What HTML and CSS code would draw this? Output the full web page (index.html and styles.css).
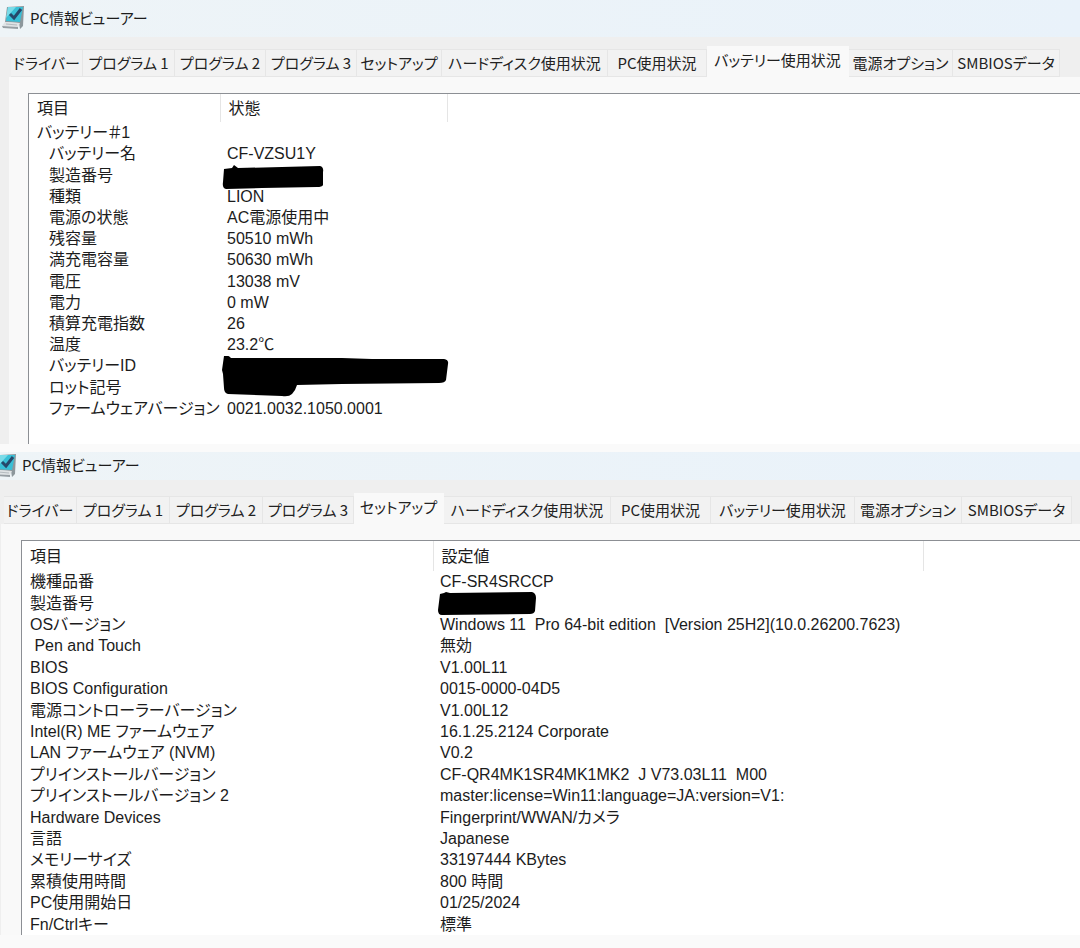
FILE: index.html
```html
<!DOCTYPE html>
<html lang="ja">
<head>
  <meta charset="UTF-8">
  <meta name="viewport" content="width=device-width, initial-scale=1.0">
  <link rel="stylesheet" href="styles.css">
  <title>PC情報ビューアー</title>
</head>
<body>

<section class="window battery">
  <header class="titlebar">
    <svg class="app-icon" viewBox="0 0 22 23" aria-hidden="true">
      <path d="M5 1L22 0L21 20L18 23L17 17L3 16Z" fill="#8d979c"/>
      <path d="M6 1L21 1L18 16L4 15Z" fill="#38bfd6"/>
      <path d="M6 1L14 1L4 12Z" fill="#7adbe8"/>
      <path d="M3 16L18 17L16 21L0 20Z" fill="#dfe3e5"/>
      <path d="M0 20L16 21L16 23L1 22Z" fill="#969ea3"/>
      <path d="M4 18L15 19" stroke="#b4bbbf" fill="none"/>
      <path d="M8 8L12 12L19 3" stroke="#26486a" stroke-width="3" fill="none"/>
    </svg>
    <h1>PC情報ビューアー</h1>
  </header>
  <nav class="tabs">
    <button>ドライバー</button>
    <button>プログラム 1</button>
    <button>プログラム 2</button>
    <button>プログラム 3</button>
    <button>セットアップ</button>
    <button>ハードディスク使用状況</button>
    <button>PC使用状況</button>
    <button class="active">バッテリー使用状況</button>
    <button>電源オプション</button>
    <button>SMBIOSデータ</button>
  </nav>
  <div class="panel">
    <div class="list">
      <table>
        <colgroup><col class="name"><col class="value"><col></colgroup>
        <thead>
          <tr><th>項目</th><th>状態</th><th></th></tr>
        </thead>
        <tbody>
          <tr class="group"><td>バッテリー＃1</td><td colspan="2"></td></tr>
          <tr><td>バッテリー名</td><td colspan="2">CF-VZSU1Y</td></tr>
          <tr><td>製造番号</td><td colspan="2" class="hidden-value">
            <svg class="ink" width="104" height="24" viewBox="0 0 104 24"><path d="M2 4L10 3L12 0L16 3L60 2L98 1Q102 2 101 7L101 20Q100 22 95 22L40 23L4 24Q0 23 1 17Z"/></svg>
          </td></tr>
          <tr><td>種類</td><td colspan="2">LION</td></tr>
          <tr><td>電源の状態</td><td colspan="2">AC電源使用中</td></tr>
          <tr><td>残容量</td><td colspan="2">50510 mWh</td></tr>
          <tr><td>満充電容量</td><td colspan="2">50630 mWh</td></tr>
          <tr><td>電圧</td><td colspan="2">13038 mV</td></tr>
          <tr><td>電力</td><td colspan="2">0 mW</td></tr>
          <tr><td>積算充電指数</td><td colspan="2">26</td></tr>
          <tr><td>温度</td><td colspan="2">23.2℃</td></tr>
          <tr><td>バッテリーID</td><td colspan="2" class="hidden-value">
            <svg class="ink" width="228" height="44" viewBox="0 0 228 44"><path d="M2 0Q5 -2 9 2L120 2L150 3L222 3Q227 4 226 8L224 24Q223 27 217 27L120 28L75 29L73 34L70 38Q67 41 60 40L6 38Q2 37 2 32L1 18L0 14Z"/></svg>
          </td></tr>
          <tr><td>ロット記号</td><td colspan="2"></td></tr>
          <tr><td>ファームウェアバージョン</td><td colspan="2">0021.0032.1050.0001</td></tr>
        </tbody>
      </table>
    </div>
  </div>
</section>

<section class="window setup">
  <header class="titlebar">
    <svg class="app-icon" viewBox="0 0 22 23" aria-hidden="true">
      <path d="M5 1L22 0L21 20L18 23L17 17L3 16Z" fill="#8d979c"/>
      <path d="M6 1L21 1L18 16L4 15Z" fill="#38bfd6"/>
      <path d="M6 1L14 1L4 12Z" fill="#7adbe8"/>
      <path d="M3 16L18 17L16 21L0 20Z" fill="#dfe3e5"/>
      <path d="M0 20L16 21L16 23L1 22Z" fill="#969ea3"/>
      <path d="M4 18L15 19" stroke="#b4bbbf" fill="none"/>
      <path d="M8 8L12 12L19 3" stroke="#26486a" stroke-width="3" fill="none"/>
    </svg>
    <h1>PC情報ビューアー</h1>
  </header>
  <nav class="tabs">
    <button>ドライバー</button>
    <button>プログラム 1</button>
    <button>プログラム 2</button>
    <button>プログラム 3</button>
    <button class="active">セットアップ</button>
    <button>ハードディスク使用状況</button>
    <button>PC使用状況</button>
    <button>バッテリー使用状況</button>
    <button>電源オプション</button>
    <button>SMBIOSデータ</button>
  </nav>
  <div class="panel">
    <div class="list">
      <table>
        <colgroup><col class="name"><col class="value"><col></colgroup>
        <thead>
          <tr><th>項目</th><th>設定値</th><th></th></tr>
        </thead>
        <tbody>
          <tr><td>機種品番</td><td colspan="2">CF-SR4SRCCP</td></tr>
          <tr><td>製造番号</td><td colspan="2" class="hidden-value">
            <svg class="ink" width="98" height="24" viewBox="0 0 98 24"><path d="M2 2L6 1L8 0L12 1L94 0Q98 1 98 6L97 19Q96 22 92 22L4 23Q0 23 0 18Z"/></svg>
          </td></tr>
          <tr><td>OSバージョン</td><td colspan="2">Windows 11  Pro 64-bit edition  [Version 25H2](10.0.26200.7623)</td></tr>
          <tr><td> Pen and Touch</td><td colspan="2">無効</td></tr>
          <tr><td>BIOS</td><td colspan="2">V1.00L11</td></tr>
          <tr><td>BIOS Configuration</td><td colspan="2">0015-0000-04D5</td></tr>
          <tr><td>電源コントローラーバージョン</td><td colspan="2">V1.00L12</td></tr>
          <tr><td>Intel(R) ME ファームウェア</td><td colspan="2">16.1.25.2124 Corporate</td></tr>
          <tr><td>LAN ファームウェア (NVM)</td><td colspan="2">V0.2</td></tr>
          <tr><td>プリインストールバージョン</td><td colspan="2">CF-QR4MK1SR4MK1MK2  J V73.03L11  M00</td></tr>
          <tr><td>プリインストールバージョン 2</td><td colspan="2">master:license=Win11:language=JA:version=V1:</td></tr>
          <tr><td>Hardware Devices</td><td colspan="2">Fingerprint/WWAN/カメラ</td></tr>
          <tr><td>言語</td><td colspan="2">Japanese</td></tr>
          <tr><td>メモリーサイズ</td><td colspan="2">33197444 KBytes</td></tr>
          <tr><td>累積使用時間</td><td colspan="2">800 時間</td></tr>
          <tr><td>PC使用開始日</td><td colspan="2">01/25/2024</td></tr>
          <tr><td>Fn/Ctrlキー</td><td colspan="2">標準</td></tr>
        </tbody>
      </table>
    </div>
  </div>
</section>

</body>
</html>
```
FILE: styles.css
```css
body {
  margin: 0;
  background-color: #fafafa;
  color: #1c1c1c;
  font-family: "Liberation Sans", "Noto Sans CJK JP", sans-serif;
  font-size: 16px;
}

.window {
  background-color: #efefef;
  overflow: hidden;
}

.titlebar {
  display: flex;
  align-items: center;
  gap: 6px;
  box-sizing: border-box;
  height: 37px;
  padding-bottom: 2px;
  background: linear-gradient(to right, #eef4f7, #e9f2fa);
}
.app-icon {
  width: 22px;
  height: 23px;
}
h1 {
  margin: 0;
  font-family: "Noto Sans CJK JP", sans-serif;
  font-feature-settings: "palt";
  font-size: 15px;
  font-weight: normal;
  line-height: 24px;
}

.tabs {
  display: grid;
  align-items: end;
  height: 31px;
}
.tabs button {
  display: flex;
  align-items: center;
  justify-content: center;
  min-width: 0;
  height: 28px;
  padding: 0;
  border: 1px solid #e6e6e6;
  border-width: 1px 1px 1px 0;
  background-color: #f2f2f2;
  color: #222;
  font-family: "Noto Sans CJK JP", sans-serif;
  font-feature-settings: "palt";
  font-size: 15px;
  line-height: 24px;
  white-space: nowrap;
}
.tabs .active {
  height: 31px;
  padding-bottom: 3px;
  border-color: #f9f9f9;
  background-color: #f9f9f9;
}

.panel {
  padding-top: 16px;
  background-color: #f9f9f9;
}
.list {
  border: 1px solid #8c8f94;
  border-width: 1px 0 0 1px;
  background-color: #fff;
}

table {
  width: 100%;
  table-layout: fixed;
  border-collapse: collapse;
}
th, td {
  padding: 0 0 0 8px;
  line-height: 21px;
  font-weight: normal;
  font-feature-settings: "palt";
  text-align: left;
  white-space: pre;
}
th {
  border-right: 1px solid #e5e5e5;
}
th:last-child {
  border-right: none;
}
.hidden-value {
  position: relative;
  white-space: normal;
}
.ink {
  position: absolute;
  top: 1px;
  left: 2px;
}

/* battery window */
.battery .titlebar {
  padding-left: 2px;
}
.battery .tabs {
  grid-template-columns: 72fr 92fr 91fr 91fr 85fr 166fr 99fr 142fr 104fr 107fr;
  margin: 9px 20px 0 11px;
}
.battery .panel {
  margin-left: 9px;
  padding-left: 19px;
}
.battery .list {
  padding-bottom: 25px;
}
.battery table {
  height: 325px;
}
.battery th {
  height: 28px;
}
.battery .name {
  width: 191px;
}
.battery .value {
  width: 227px;
}
.battery td {
  padding-left: 7px;
}
.battery td:first-child {
  padding-left: 20px;
}
.battery .group td:first-child {
  padding-left: 8px;
}

/* setup window */
.setup {
  margin: 8px 0 13px;
}
.setup .titlebar {
  height: 28px;
}
.setup .app-icon {
  margin-left: -6px;
}
.setup .tabs {
  grid-template-columns: 73fr 93fr 93fr 91fr 90fr 167fr 100fr 144fr 107fr 110fr;
  margin: 13px 8px 0 4px;
}
.setup .panel {
  margin-left: 1px;
  padding-left: 20px;
}
.setup table {
  height: 394px;
}
.setup th {
  height: 30px;
}
.setup .name {
  width: 411px;
}
.setup .value {
  width: 490px;
}
.setup td {
  padding-left: 7px;
}
.setup td:first-child {
  padding-left: 8px;
}
.setup .ink {
  top: 0;
  left: 5px;
}
```
